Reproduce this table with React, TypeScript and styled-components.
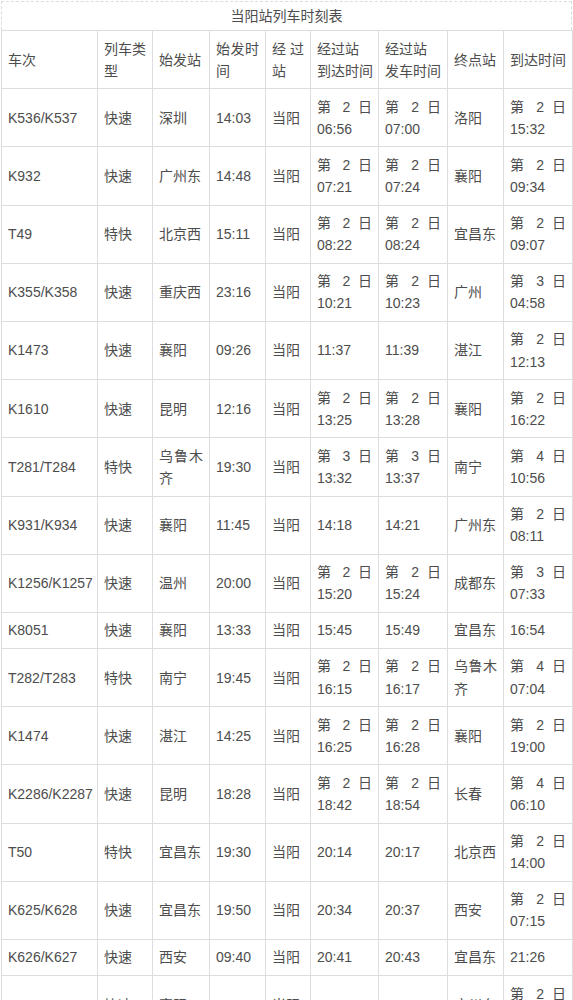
import React from "react";
import styled, { createGlobalStyle } from "styled-components";

const GlobalStyle = createGlobalStyle`
  html, body {
    margin: 0;
    padding: 0;
    background: #ffffff;
    overflow: hidden;
  }
  body {
    font-family: "Liberation Sans", "Noto Sans CJK SC", sans-serif;
    color: #4d4d4d;
  }
`;

const Page = styled.div`
  width: 573px;
  display: flex;
  flex-direction: column;
`;

const Title = styled.div`
  height: 26px;
  padding-bottom: 2px;
  margin: 1px 1px 0 1px;
  border: 1px dashed #dcdcdc;
  border-bottom: none;
  display: flex;
  align-items: center;
  justify-content: center;
  font-size: 14px;
  color: #4d4d4d;
`;

const Table = styled.table`
  width: 571px;
  margin-left: 1px;
  border-collapse: collapse;
  table-layout: fixed;
`;

const Cell = styled.td<{ $nowrap?: boolean }>`
  border: 1px solid #dddddd;
  padding: 6.5px 6px;
  font-size: 14px;
  line-height: 22.1px;
  font-weight: normal;
  text-align: justify;
  vertical-align: middle;
  color: #4d4d4d;
  white-space: ${(p) => (p.$nowrap ? "nowrap" : "normal")};
  word-break: normal;
`;

const HeadCell = styled(Cell).attrs({ as: "th" })``;

const widths = [96, 55, 57, 56, 45, 68, 69, 56, 69];

type Row = string[];

const rows: Row[] = [
  ["K536/K537", "快速", "深圳", "14:03", "当阳", "第 2 日 06:56", "第 2 日 07:00", "洛阳", "第 2 日 15:32"],
  ["K932", "快速", "广州东", "14:48", "当阳", "第 2 日 07:21", "第 2 日 07:24", "襄阳", "第 2 日 09:34"],
  ["T49", "特快", "北京西", "15:11", "当阳", "第 2 日 08:22", "第 2 日 08:24", "宜昌东", "第 2 日 09:07"],
  ["K355/K358", "快速", "重庆西", "23:16", "当阳", "第 2 日 10:21", "第 2 日 10:23", "广州", "第 3 日 04:58"],
  ["K1473", "快速", "襄阳", "09:26", "当阳", "11:37", "11:39", "湛江", "第 2 日 12:13"],
  ["K1610", "快速", "昆明", "12:16", "当阳", "第 2 日 13:25", "第 2 日 13:28", "襄阳", "第 2 日 16:22"],
  ["T281/T284", "特快", "乌鲁木齐", "19:30", "当阳", "第 3 日 13:32", "第 3 日 13:37", "南宁", "第 4 日 10:56"],
  ["K931/K934", "快速", "襄阳", "11:45", "当阳", "14:18", "14:21", "广州东", "第 2 日 08:11"],
  ["K1256/K1257", "快速", "温州", "20:00", "当阳", "第 2 日 15:20", "第 2 日 15:24", "成都东", "第 3 日 07:33"],
  ["K8051", "快速", "襄阳", "13:33", "当阳", "15:45", "15:49", "宜昌东", "16:54"],
  ["T282/T283", "特快", "南宁", "19:45", "当阳", "第 2 日 16:15", "第 2 日 16:17", "乌鲁木齐", "第 4 日 07:04"],
  ["K1474", "快速", "湛江", "14:25", "当阳", "第 2 日 16:25", "第 2 日 16:28", "襄阳", "第 2 日 19:00"],
  ["K2286/K2287", "快速", "昆明", "18:28", "当阳", "第 2 日 18:42", "第 2 日 18:54", "长春", "第 4 日 06:10"],
  ["T50", "特快", "宜昌东", "19:30", "当阳", "20:14", "20:17", "北京西", "第 2 日 14:00"],
  ["K625/K628", "快速", "宜昌东", "19:50", "当阳", "20:34", "20:37", "西安", "第 2 日 07:15"],
  ["K626/K627", "快速", "西安", "09:40", "当阳", "20:41", "20:43", "宜昌东", "21:26"],
  ["K935", "快速", "襄阳", "19:40", "当阳", "21:55", "22:00", "广州东", "第 2 日 08:40"],
];

export default function App() {
  return (
    <Page>
      <GlobalStyle />
      <Title>当阳站列车时刻表</Title>
      <Table>
        <colgroup>
          {widths.map((w, i) => (
            <col key={i} style={{ width: w }} />
          ))}
        </colgroup>
        <thead>
          <tr>
            <HeadCell>车次</HeadCell>
            <HeadCell>列车类型</HeadCell>
            <HeadCell>始发站</HeadCell>
            <HeadCell>始发时间</HeadCell>
            <HeadCell>经过站</HeadCell>
            <HeadCell $nowrap>
              经过站
              <br />
              到达时间
            </HeadCell>
            <HeadCell $nowrap>
              经过站
              <br />
              发车时间
            </HeadCell>
            <HeadCell>终点站</HeadCell>
            <HeadCell $nowrap>到达时间</HeadCell>
          </tr>
        </thead>
        <tbody>
          {rows.map((r, i) => (
            <tr key={i}>
              {r.map((c, j) => (
                <Cell key={j} $nowrap={j === 0}>
                  {c}
                </Cell>
              ))}
            </tr>
          ))}
        </tbody>
      </Table>
    </Page>
  );
}
